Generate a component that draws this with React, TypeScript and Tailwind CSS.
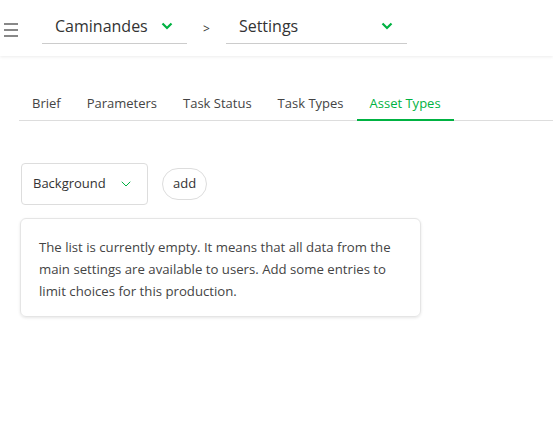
import { ChevronDown } from 'lucide-react'

const tabs = ['Brief', 'Parameters', 'Task Status', 'Task Types', 'Asset Types']

export default function App() {
  return (
    <div className="h-[430px] w-[553px] overflow-hidden bg-white font-['Open_Sans',sans-serif] text-[#333]">
      <header className="flex h-14 items-start shadow-[0_1px_3px_rgba(0,0,0,0.08)]">
        <div className="ml-1 mt-[23px] flex w-[14px] flex-col gap-[4px]">
          <span className="h-[2px] bg-[#888]" />
          <span className="h-[2px] bg-[#888]" />
          <span className="h-[2px] bg-[#888]" />
        </div>
        <HeaderSelect label="Caminandes" className="ml-6 w-[145px]" />
        <span className="ml-4 mt-[20px] text-[12px] text-[#333]">&gt;</span>
        <HeaderSelect label="Settings" className="ml-4 w-[181px]" />
      </header>

      <nav className="ml-[19px] mt-[29px] flex border-b border-[#ddd] text-[13px]">
        {tabs.map((tab) => (
          <div
            key={tab}
            className={
              tab === 'Asset Types'
                ? '-mb-px border-b-2 border-[#00b242] px-[13px] pb-[5px] pt-[9px] text-[#00b242]'
                : 'px-[13px] pb-[5px] pt-[9px] text-[#444]'
            }
          >
            {tab}
          </div>
        ))}
      </nav>

      <div className="ml-[21px] mt-[42px] flex items-center gap-[14px]">
        <div className="flex h-[42px] w-[127px] items-center justify-between rounded border border-[#ddd] pl-[11px] pr-[13px] text-[13px] text-[#333]">
          <span>Background</span>
          <ChevronDown size={16} strokeWidth={1.5} className="text-[#00b242]" />
        </div>
        <button className="h-[32px] rounded-full border border-[#ddd] px-[10px] text-[13px] text-[#333]">add</button>
      </div>

      <div className="ml-[20px] mt-[13px] w-[401px] rounded-[6px] border border-[#e5e5e5] px-[18px] pb-[14px] pt-[17px] text-[13.2px] leading-[22px] text-[#444] shadow-[0_1px_3px_rgba(0,0,0,0.1)]">
        The list is currently empty. It means that all data from the main settings are available to users. Add some entries to limit choices for this production.
      </div>
    </div>
  )
}

function HeaderSelect({ label, className }: { label: string; className: string }) {
  return (
    <div className={`mt-[8px] flex h-[36px] items-center justify-between border-b border-[#ccc] pl-[13px] pr-[14px] ${className}`}>
      <span className="text-[16px] text-[#333]">{label}</span>
      <svg width="12" height="8" viewBox="0 0 12 8" className="text-[#00b242]">
        <path d="M1.5 1.5 L6 6 L10.5 1.5" fill="none" stroke="currentColor" strokeWidth="2.2" />
      </svg>
    </div>
  )
}
